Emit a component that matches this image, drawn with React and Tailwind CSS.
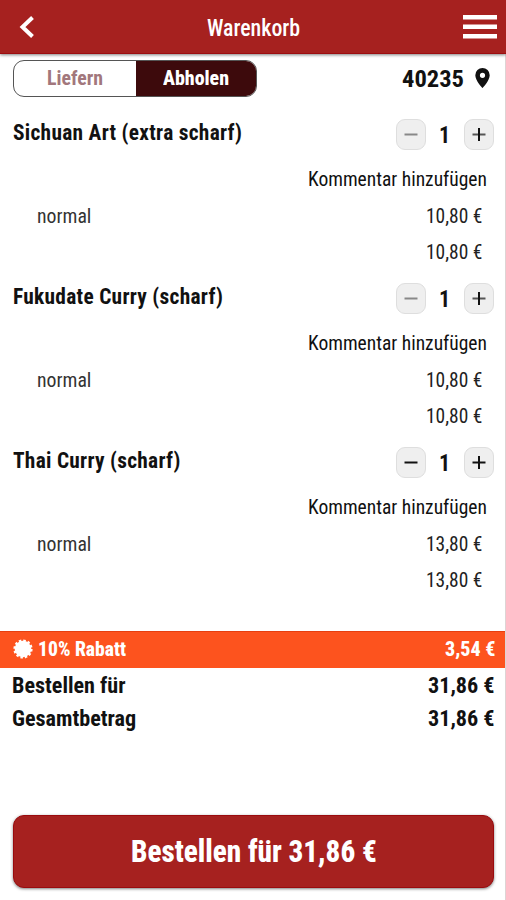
import { useLayoutEffect, useRef, useState } from "react";

// Condenses a line of text horizontally to the given width.
function Fit({ w, className = "", children }) {
  const ref = useRef(null);
  const [scale, setScale] = useState(1);
  useLayoutEffect(() => {
    setScale(w / ref.current.offsetWidth);
  }, [w, children]);
  return (
    <span className={"block shrink-0 whitespace-nowrap " + className} style={{ width: w }}>
      <span ref={ref} className="inline-block origin-left" style={{ transform: `scaleX(${scale})` }}>
        {children}
      </span>
    </span>
  );
}

function StepButton({ plus, muted }) {
  return (
    <button className="flex h-[31px] w-[30px] items-center justify-center rounded-[9px] border border-[#dedede] bg-[#efefef]">
      <svg width="14" height="15" viewBox="0 0 14 15" fill="none" strokeWidth="2">
        <path d="M.5 7.500h13" stroke={muted ? (plus ? "#555" : "#888") : "#111"} />
        {plus && <path d="M7 1v13" stroke="#111" />}
      </svg>
    </button>
  );
}

function Item({ name, width, price, muted }) {
  return (
    <section className="h-[164px] pl-[13px]">
      <div className="flex h-[31px] items-center pr-[11px]">
        <Fit w={width} className="-mt-[4px] text-[22.5px] font-bold tracking-[0.3px]">{name}</Fit>
        <div className="ml-auto flex items-center">
          <StepButton muted={muted} />
          <Fit w={11} className="mr-[14px] ml-[13px] text-[24px] font-bold">1</Fit>
          <StepButton plus muted={muted} />
        </div>
      </div>
      <div className="mt-[11px] flex h-[36px] items-center justify-end pr-[18px] text-[20.5px]">
        <Fit w={179}>Kommentar hinzufügen</Fit>
      </div>
      <div className="mt-[1px] flex h-[36px] items-center justify-between pr-[23px] pl-[24px] text-[20.5px]">
        <Fit w={54} className="text-[#333]">normal</Fit>
        <Fit w={56} className="text-[#222]">{price}</Fit>
      </div>
      <div className="flex h-[36px] items-center justify-end pr-[23px] text-[20.5px]">
        <Fit w={56} className="text-[#222]">{price}</Fit>
      </div>
    </section>
  );
}

export default function App() {
  return (
    <div className="flex h-[900px] w-[506px] flex-col overflow-hidden bg-white font-['Roboto_Condensed','Roboto',sans-serif] leading-none text-[#111] [font-stretch:75%]">
      <header className="relative flex h-[54px] shrink-0 items-center justify-between border-b border-[#9c0d10] bg-[#a6211f] pr-[9px] pl-[18px] shadow-[0_1px_3px_rgba(0,0,0,0.5)]">
        <svg width="18" height="24" viewBox="0 0 18 24" fill="none" stroke="#fff" strokeWidth="4">
          <path d="M14.500 2.500L4.500 12l10 9.500" />
        </svg>
        <Fit w={93} className="ml-[8px] mt-[3px] text-[23px] font-medium text-white">Warenkorb</Fit>
        <svg width="34" height="24" viewBox="0 0 34 24" fill="#fff">
          <path d="M0 0h34v4.500H0zM0 9.500h34v4.500H0zM0 19h34v4.500H0z" />
        </svg>
      </header>
      <main className="flex flex-1 flex-col border-r border-[#ddd4d4]">
        <div className="flex h-[65px] items-start pt-[6px] pr-[15px] pl-[13px]">
          <div className="flex h-[37px] w-[244px] overflow-hidden rounded-[11px] border border-[#555]">
            <div className="flex w-[122px] items-center justify-center text-[20.5px] font-bold text-[#a2777c]">
              <Fit w={56}>Liefern</Fit>
            </div>
            <div className="flex flex-1 items-center justify-center bg-[#3d0a0c] text-[20.5px] font-extrabold text-white">
              <Fit w={66}>Abholen</Fit>
            </div>
          </div>
          <div className="ml-auto flex h-[37px] items-center pt-[1px]">
            <Fit w={62} className="text-[24.5px] font-bold">40235</Fit>
            <svg className="-mt-[2px] ml-[11px]" width="15" height="20" viewBox="0 0 15 20" fill="#111" fillRule="evenodd">
              <path d="M7.500 0A7.200 7.200 0 0 0 .3 7.200C.3 12.500 7.500 20 7.500 20s7.200-7.500 7.200-12.800A7.200 7.200 0 0 0 7.500 0zm0 4.700a2.600 2.600 0 1 1 0 5.200 2.600 2.600 0 0 1 0-5.200z" />
            </svg>
          </div>
        </div>
        <Item name="Sichuan Art (extra scharf)" width={229} price="10,80 €" muted />
        <Item name="Fukudate Curry (scharf)" width={210} price="10,80 €" muted />
        <Item name="Thai Curry (scharf)" width={168} price="13,80 €" />
        <div className="mt-[20px] flex h-[37px] items-center border-t border-[#e63f10] bg-[#fd531e] pr-[10px] pb-[2px] pl-[13px] text-[20px] font-extrabold text-white">
          <svg width="20" height="20" viewBox="-10 -10 20 20" fill="#fff" stroke="#fff">
            <circle r="8.300" stroke="none" />
            <circle r="8.500" fill="none" strokeWidth="2.200" strokeDasharray="2.500 1.951" />
          </svg>
          <Fit w={88} className="ml-[5px]">10% Rabatt</Fit>
          <Fit w={50} className="ml-auto">3,54 €</Fit>
        </div>
        <div className="flex h-[34px] items-center justify-between pr-[10px] pl-[12px] text-[22.5px] font-bold">
          <Fit w={114}>Bestellen für</Fit>
          <Fit w={67}>31,86 €</Fit>
        </div>
        <div className="flex h-[33px] items-center justify-between pr-[10px] pl-[12px] text-[22.5px] font-bold">
          <Fit w={124}>Gesamtbetrag</Fit>
          <Fit w={67}>31,86 €</Fit>
        </div>
        <button className="mt-auto mr-[11px] mb-[12px] ml-[13px] flex h-[73px] items-center justify-center rounded-[11px] border border-[#9a0b0e] bg-[#a6211f] pb-[2px] text-[32px] font-extrabold text-white shadow-[0_1px_3px_rgba(0,0,0,0.5)]">
          <Fit w={246}>Bestellen für 31,86 €</Fit>
        </button>
      </main>
    </div>
  );
}
